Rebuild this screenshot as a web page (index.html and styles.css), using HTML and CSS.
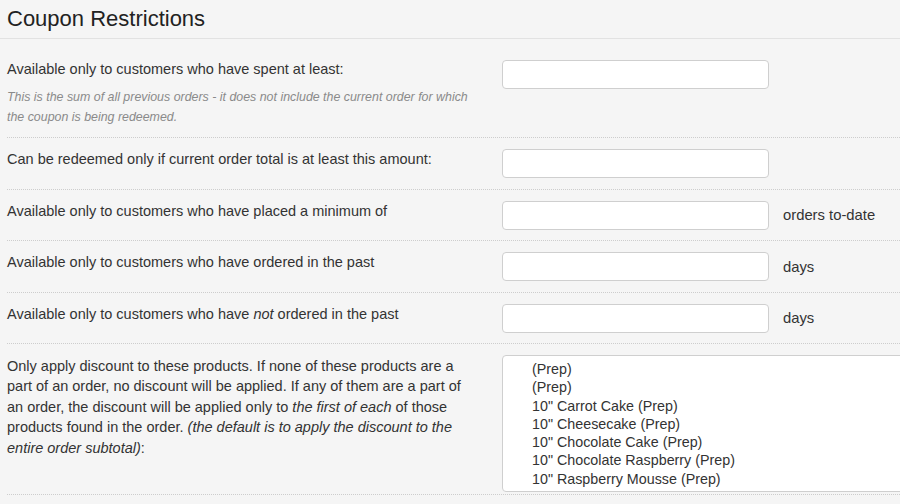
FILE: index.html
```html
<!DOCTYPE html>
<html>
<head>
<meta charset="utf-8">
<link rel="stylesheet" href="styles.css">
</head>
<body>
<div class="page">
  <h2 class="title">Coupon Restrictions</h2>

  <div class="row row-first">
    <div class="label">
      <div>Available only to customers who have spent at least:</div>
      <div class="hint">This is the sum of all previous orders - it does not include the current order for which the coupon is being redeemed.</div>
    </div>
    <div class="field"><input class="input" type="text"></div>
  </div>

  <div class="row">
    <div class="label">Can be redeemed only if current order total is at least this amount:</div>
    <div class="field"><input class="input" type="text"></div>
  </div>

  <div class="row">
    <div class="label">Available only to customers who have placed a minimum of</div>
    <div class="field"><input class="input" type="text"><span class="unit">orders to-date</span></div>
  </div>

  <div class="row">
    <div class="label">Available only to customers who have ordered in the past</div>
    <div class="field"><input class="input" type="text"><span class="unit">days</span></div>
  </div>

  <div class="row">
    <div class="label">Available only to customers who have <em>not</em> ordered in the past</div>
    <div class="field"><input class="input" type="text"><span class="unit">days</span></div>
  </div>

  <div class="row row-products">
    <div class="label label-long">Only apply discount to these products. If none of these products are a part of an order, no discount will be applied. If any of them are a part of an order, the discount will be applied only to <em>the first of each</em> of those products found in the order. <em>(the default is to apply the discount to the entire order subtotal)</em>:</div>
    <div class="field">
      <div class="listbox">
        <div class="option">(Prep)</div>
        <div class="option">(Prep)</div>
        <div class="option">10" Carrot Cake (Prep)</div>
        <div class="option">10" Cheesecake (Prep)</div>
        <div class="option">10" Chocolate Cake (Prep)</div>
        <div class="option">10" Chocolate Raspberry (Prep)</div>
        <div class="option">10" Raspberry Mousse (Prep)</div>
        <div class="option">10" Yellow Cake (Prep)</div>
      </div>
    </div>
  </div>
</div>
</body>
</html>
```

FILE: styles.css
```css
html, body {
  margin: 0;
  padding: 0;
  overflow: hidden;
  background: #f5f5f5;
}

body {
  font-family: "Liberation Sans", Arial, sans-serif;
  color: #333;
  font-size: 14.5px;
  width: 900px;
  height: 504px;
}

.page {
  width: 900px;
}

.title {
  margin: 0;
  padding: 6px 7px 7px 7px;
  font-size: 22px;
  line-height: 25px;
  font-weight: normal;
  color: #222;
  border-bottom: 1px solid #e2e2e2;
  margin-bottom: 10px;
}

.row {
  display: flex;
  align-items: flex-start;
  margin-left: 7px;
  padding: 11px 0 10.4px 0;
  border-bottom: 1px dotted #cdcdcd;
}

.label {
  box-sizing: border-box;
  width: 495px;
  flex: none;
  padding-right: 28px;
  line-height: 20px;
}

.row-first .label {
  margin-top: -1px;
}

.hint {
  font-size: 12.4px;
  font-style: italic;
  color: #8a8a8a;
  line-height: 20px;
  margin-top: 8px;
}

.label-long {
  line-height: 20.5px;
  padding-right: 26px;
  padding-top: 1px;
}

.field {
  display: flex;
  align-items: center;
  flex: none;
}

.input {
  box-sizing: border-box;
  width: 267px;
  height: 29px;
  margin: 0;
  border: 1px solid #cfcfcf;
  border-radius: 4px;
  background: #fff;
  font: inherit;
  padding: 0 8px;
}

.unit {
  margin-left: 14px;
  color: #333;
  font-size: 14.8px;
}

.row-products {
  padding-bottom: 2px;
}

.listbox {
  box-sizing: border-box;
  width: 420px;
  height: 137px;
  overflow: hidden;
  background: #fff;
  border: 1px solid #cfcfcf;
  border-radius: 4px;
  padding: 4px 0 0 29px;
}

.option {
  line-height: 18.3px;
  color: #333;
  font-size: 14.3px;
  white-space: nowrap;
}
```
